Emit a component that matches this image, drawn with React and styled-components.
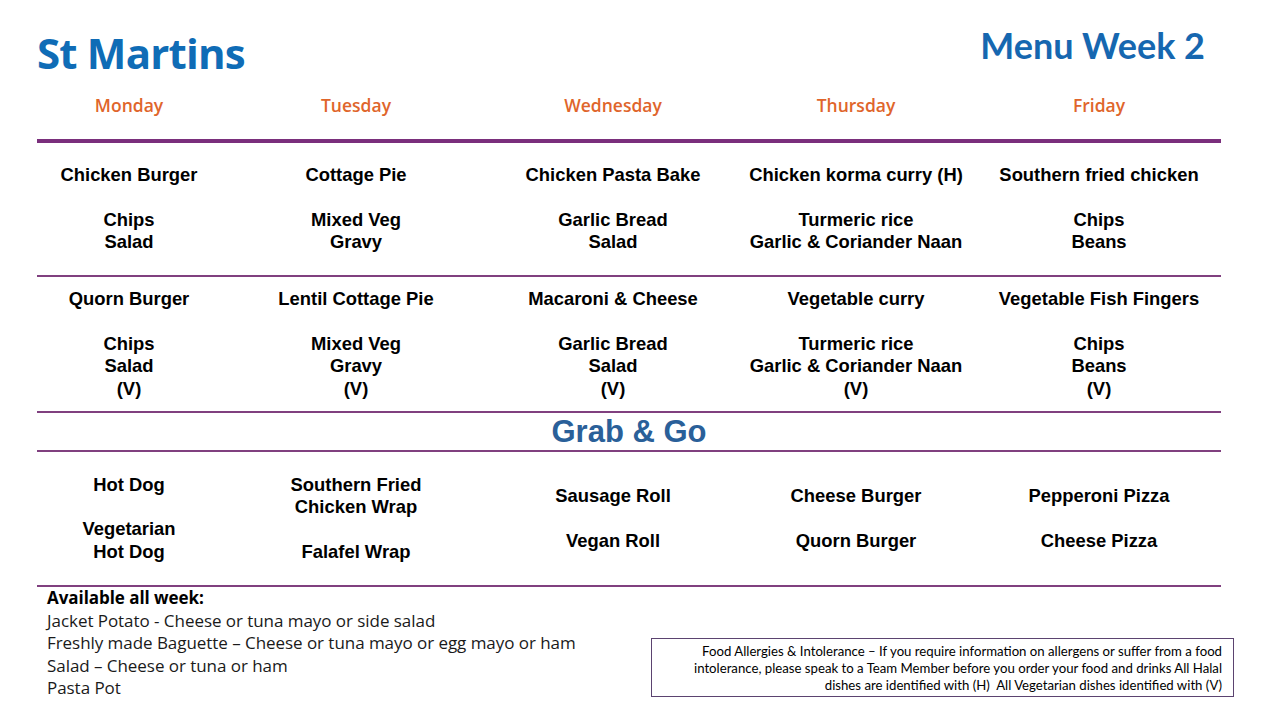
import React from "react"
import styled, { createGlobalStyle } from "styled-components"

const GlobalStyle = createGlobalStyle`
  html, body {
    margin: 0;
    padding: 0;
    background: #ffffff;
  }
  body {
    font-family: "Liberation Sans", Arial, sans-serif;
    color: #000000;
  }
`

const Page = styled.div`
  width: 1280px;
  height: 720px;
  box-sizing: border-box;
  padding: 0 46px 0 37px;
  overflow: hidden;
`

const Header = styled.header`
  height: 90px;
  box-sizing: border-box;
  padding: 26px 29px 0 0;
  display: flex;
  justify-content: space-between;
  align-items: flex-start;
`

const School = styled.h1`
  margin: 3px 0 0 0;
  font-family: "Open Sans", sans-serif;
  font-weight: 700;
  font-size: 42px;
  line-height: 48px;
  letter-spacing: -0.8px;
  color: #0f6cb6;
`

const WeekTitle = styled.h2`
  margin: -1px 0 0 0;
  font-family: "Lato", sans-serif;
  font-weight: 700;
  font-size: 36px;
  line-height: 40px;
  color: #1667b0;
`

const Table = styled.div`
  width: 1184px;
`

const Grid = styled.div`
  display: grid;
  grid-template-columns: 184px 270px 244px 242px 244px;
`

const DayRow = styled(Grid)`
  height: 49px;
  border-bottom: 4px solid #7a2f7c;
`

const Day = styled.div`
  text-align: center;
  font-family: "Open Sans", sans-serif;
  font-weight: 600;
  font-size: 17.5px;
  line-height: 30px;
  color: #e0652b;
`

const MealRow = styled(Grid)`
  height: ${p => p.$h}px;
  border-bottom: 2px solid #80407f;
`

const Cell = styled.div`
  display: flex;
  flex-direction: column;
  justify-content: center;
  align-items: center;
  text-align: center;
  font-weight: 700;
  font-size: 18.4px;
  line-height: 22.4px;
`

const Line = styled.div`
  min-height: 22.4px;
  white-space: nowrap;
`

const Banner = styled.div`
  height: 37px;
  border-bottom: 2px solid #80407f;
  display: flex;
  align-items: center;
  justify-content: center;
  font-weight: 700;
  font-size: 31px;
  color: #2a6099;
`

const Footer = styled.footer`
  display: flex;
  justify-content: space-between;
  align-items: flex-start;
`

const Always = styled.div`
  padding-left: 10px;
  font-family: "Open Sans", sans-serif;
  font-size: 17px;
  line-height: 22.5px;
  letter-spacing: -0.05px;
  color: #1a1a1a;
`

const AlwaysTitle = styled.div`
  font-weight: 700;
  color: #000;
`

const Allergy = styled.div`
  margin-top: 51px;
  width: 583px;
  height: 59px;
  box-sizing: border-box;
  border: 1px solid #5b4370;
  padding: 4px 11px 0 0;
  text-align: right;
  font-family: "Lato", sans-serif;
  font-size: 13.2px;
  line-height: 17px;
  color: #000;
`

const days = ["Monday", "Tuesday", "Wednesday", "Thursday", "Friday"]

const hotMeals = [
  [
    ["Chicken Burger", "", "Chips", "Salad"],
    ["Cottage Pie", "", "Mixed Veg", "Gravy"],
    ["Chicken Pasta Bake", "", "Garlic Bread", "Salad"],
    ["Chicken korma curry (H)", "", "Turmeric rice", "Garlic & Coriander Naan"],
    ["Southern fried chicken", "", "Chips", "Beans"],
  ],
  [
    ["Quorn Burger", "", "Chips", "Salad", "(V)"],
    ["Lentil Cottage Pie", "", "Mixed Veg", "Gravy", "(V)"],
    ["Macaroni & Cheese", "", "Garlic Bread", "Salad", "(V)"],
    ["Vegetable curry", "", "Turmeric rice", "Garlic & Coriander Naan", "(V)"],
    ["Vegetable Fish Fingers", "", "Chips", "Beans", "(V)"],
  ],
]

const grabAndGo = [
  ["Hot Dog", "", "Vegetarian", "Hot Dog"],
  ["Southern Fried", "Chicken Wrap", "", "Falafel Wrap"],
  ["Sausage Roll", "", "Vegan Roll"],
  ["Cheese Burger", "", "Quorn Burger"],
  ["Pepperoni Pizza", "", "Cheese Pizza"],
]

const MenuRow = ({ cells, height }) => (
  <MealRow $h={height}>
    {cells.map((lines, i) => (
      <Cell key={i}>
        {lines.map((l, j) => <Line key={j}>{l}</Line>)}
      </Cell>
    ))}
  </MealRow>
)

export default function App() {
  return (
    <>
      <GlobalStyle />
      <Page>
        <Header>
          <School>St Martins</School>
          <WeekTitle>Menu Week 2</WeekTitle>
        </Header>
        <Table>
          <DayRow>
            {days.map(d => <Day key={d}>{d}</Day>)}
          </DayRow>
          <MenuRow cells={hotMeals[0]} height={132} />
          <MenuRow cells={hotMeals[1]} height={134} />
          <Banner>Grab &amp; Go</Banner>
          <MenuRow cells={grabAndGo} height={133} />
        </Table>
        <Footer>
          <Always>
            <AlwaysTitle>Available all week:</AlwaysTitle>
            <div>Jacket Potato - Cheese or tuna mayo or side salad</div>
            <div>Freshly made Baguette – Cheese or tuna mayo or egg mayo or ham</div>
            <div>Salad – Cheese or tuna or ham</div>
            <div>Pasta Pot</div>
          </Always>
          <Allergy>
            Food Allergies &amp; Intolerance – If you require information on allergens or suffer from a food
            <br />
            intolerance, please speak to a Team Member before you order your food and drinks All Halal
            <br />
            dishes are identified with (H)&nbsp; All Vegetarian dishes identified with (V)
          </Allergy>
        </Footer>
      </Page>
    </>
  )
}
